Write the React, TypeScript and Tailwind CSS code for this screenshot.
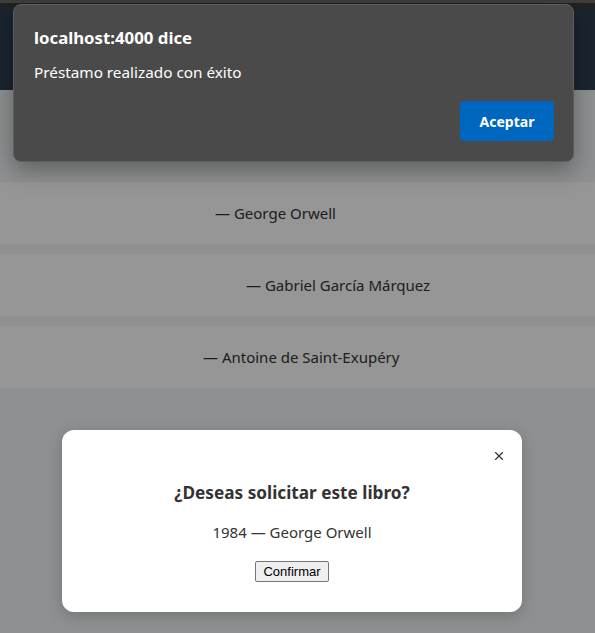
import { X } from "lucide-react";

const books = [
  { author: "George Orwell", pad: "pl-[215px]" },
  { author: "Gabriel García Márquez", pad: "pl-[246px]" },
  { author: "Antoine de Saint-Exupéry", pad: "pl-[203px]" },
];

function BrowserAlert() {
  return (
    <div className="absolute left-[13px] top-[4px] z-30 h-[158px] w-[561px] rounded-[8px] border border-[#5e5e5e] bg-[#4a4a4a] shadow-[0_8px_24px_rgba(0,0,0,0.35)] font-['Noto_Sans',sans-serif]">
      <div className="px-[20px] pt-[21px] text-[16.8px] font-bold leading-[24px] text-white">localhost:4000 dice</div>
      <div className="px-[20px] pt-[12px] text-[15.3px] leading-[20px] text-white">Préstamo realizado con éxito</div>
      <div className="flex justify-end px-[19px] pt-[19px]">
        <button className="h-[40px] w-[94px] rounded-[4px] bg-[#0067c0] text-[14px] font-bold text-white">Aceptar</button>
      </div>
    </div>
  );
}

function ConfirmModal() {
  return (
    <div className="absolute inset-0 z-20 flex items-start bg-black/40 pl-[62px] pt-[430px]">
      <div className="relative flex h-[182px] w-[460px] flex-col items-center rounded-[12px] bg-white pt-[51px] shadow-[0_4px_16px_rgba(0,0,0,0.2)]">
        <button className="absolute right-[16px] top-[19px] text-[#333]">
          <X size={14} strokeWidth={2} />
        </button>
        <h2 className="text-[17.2px] font-bold leading-[24px] text-[#333]">¿Deseas solicitar este libro?</h2>
        <p className="mt-[17px] text-[15px] leading-[20px] text-[#333]">1984 — George Orwell</p>
        <button className="mt-[19px] h-[21px] rounded-[2px] border border-[#767676] bg-[#efefef] px-[7px] font-['Liberation_Sans',sans-serif] text-[13px] leading-[17px] text-black">
          Confirmar
        </button>
      </div>
    </div>
  );
}

export default function App() {
  return (
    <div className="relative h-[633px] w-[595px] overflow-hidden bg-[#eef0f2] font-['Noto_Sans',sans-serif]">
      <div className="h-[3px] bg-[#6a6a6a]" />
      <div className="h-[6px] bg-[#3a3a3a]" />
      <div className="h-[81px] bg-[#2c3e50]" />
      <div className="flex flex-col gap-[10px] pt-[92px]">
        {books.map((b) => (
          <div key={b.author} className={`flex h-[62px] items-center bg-[#fafafa] text-[15px] text-[#333] ${b.pad}`}>
            — {b.author}
          </div>
        ))}
      </div>
      <ConfirmModal />
      <BrowserAlert />
    </div>
  );
}
